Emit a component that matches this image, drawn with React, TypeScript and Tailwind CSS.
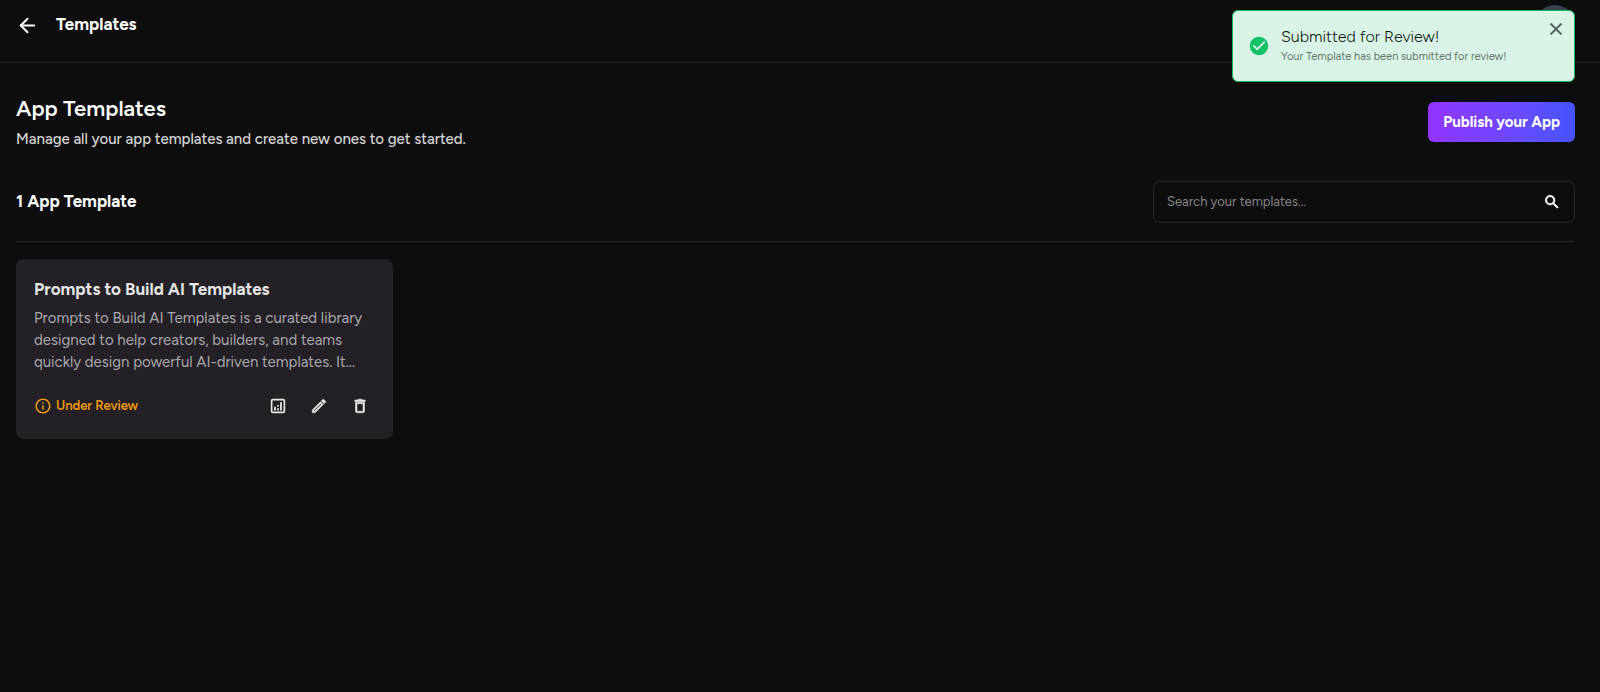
import { useState } from "react";
import { ArrowLeft } from "lucide-react";
import {
  MdCheckCircle,
  MdClose,
  MdDeleteOutline,
  MdInfoOutline,
  MdOutlineModeEdit,
  MdSearch,
} from "react-icons/md";

type Template = {
  id: string;
  title: string;
  description: string;
  status: string;
};

const templates: Template[] = [
  {
    id: "prompts-to-build",
    title: "Prompts to Build AI Templates",
    description:
      "Prompts to Build AI Templates is a curated library designed to help creators, builders, and teams quickly design powerful AI-driven templates. It...",
    status: "Under Review",
  },
];

// the first path of a Material icon is its empty bounding box, so only the last one gets a stroke
const boldIcon = "[&>path:last-child]:stroke-current [&>path:last-child]:stroke-[0.7px]";

function AnalyticsIcon() {
  return (
    <svg width="18" height="18" viewBox="0 0 24 24" fill="none" stroke="currentColor" aria-hidden="true">
      <rect x="3.5" y="3.5" width="17" height="17" rx="1.5" strokeWidth="2.2" />
      <path d="M8 18v-5M12 18v-3M12 12.5v-2M16 18V7" strokeWidth="2.4" />
    </svg>
  );
}

function Header() {
  return (
    <header className="flex h-[63px] items-start justify-between border-b border-[#242424] pt-[5px] pr-[25px] pl-4">
      <div className="flex h-10 items-center gap-[17px]">
        <button type="button" aria-label="Back" className="text-white">
          <ArrowLeft size={23} />
        </button>
        <h1 className="text-[17px] font-bold">Templates</h1>
      </div>
      <button type="button" aria-label="Account" className="h-10 w-10 rounded-full bg-[#374151]" />
    </header>
  );
}

function Toast({ onClose }: { onClose: () => void }) {
  return (
    <div
      role="status"
      className="absolute top-[10px] right-[25px] flex h-[72px] w-[343px] items-center rounded-md border border-[#12b85f] bg-[#d9f4e6] pl-[15px]"
    >
      <MdCheckCircle size={22} className="shrink-0 text-[#12c065]" />
      <div className="ml-[11px] pt-0.5">
        <p className="text-base leading-5 font-light text-[#0d1511]">Submitted for Review!</p>
        <p className="text-[11px] leading-5 text-[#68766f]">Your Template has been submitted for review!</p>
      </div>
      <button type="button" aria-label="Close" onClick={onClose} className="absolute top-2 right-2 text-[#56625c]">
        <MdClose size={20} className={boldIcon} />
      </button>
    </div>
  );
}

function TemplateCard({ template }: { template: Template }) {
  return (
    <article className="rounded-lg bg-[#232126] px-[18px] pt-[18px] pb-5">
      <h3 className="text-[17px] leading-6 font-bold text-[#e4e4e4]">{template.title}</h3>
      <p className="mt-1.5 text-[15px] leading-[22px] text-[#a9a8aa]">{template.description}</p>
      <div className="mt-5 flex h-[26px] items-center justify-between">
        <span className="flex items-center gap-1 text-[13px] font-semibold text-[#f59a0b]">
          <MdInfoOutline size={18} />
          {template.status}
        </span>
        <div className="flex gap-[23px] pr-1.5 text-[#e8e8e8]">
          <button type="button" aria-label="Analytics">
            <AnalyticsIcon />
          </button>
          <button type="button" aria-label="Edit">
            <MdOutlineModeEdit size={18} className={boldIcon} />
          </button>
          <button type="button" aria-label="Delete">
            <MdDeleteOutline size={18} className={boldIcon} />
          </button>
        </div>
      </div>
    </article>
  );
}

export default function App() {
  const [showToast, setShowToast] = useState(true);

  return (
    <div className="relative min-h-screen bg-[#0d0d0d] font-['Figtree','Lato',sans-serif] text-white">
      <Header />
      {showToast && <Toast onClose={() => setShowToast(false)} />}

      <main className="pr-[25px] pl-4">
        <div className="flex items-start justify-between pt-[29px]">
          <div>
            <h2 className="text-[22px] leading-[34px] font-semibold">App Templates</h2>
            <p className="text-[15px] leading-[26px] font-medium text-[#d4d4d4]">
              Manage all your app templates and create new ones to get started.
            </p>
          </div>
          <button
            type="button"
            className="mt-2.5 h-10 rounded-md bg-linear-to-r from-[#9333ff] to-[#4353ff] px-[15px] text-[15px] font-bold"
          >
            Publish your App
          </button>
        </div>

        <div className="mt-[29px] flex items-center justify-between border-b border-[#262626] pb-[18px]">
          <h2 className="text-[17px] font-bold">1 App Template</h2>
          <form
            role="search"
            onSubmit={(e) => e.preventDefault()}
            className="flex h-[42px] w-[422px] items-center rounded-md border border-[#262626] px-[13px]"
          >
            <input
              type="text"
              aria-label="Search your templates"
              placeholder="Search your templates..."
              className="min-w-0 flex-1 bg-transparent text-[13px] outline-none placeholder:text-[#858585]"
            />
            <button type="submit" aria-label="Search">
              <MdSearch size={18} className={boldIcon} />
            </button>
          </form>
        </div>

        <div className="mt-[17px] grid grid-cols-4 gap-[17px]">
          {templates.map((template) => (
            <TemplateCard key={template.id} template={template} />
          ))}
        </div>
      </main>
    </div>
  );
}
